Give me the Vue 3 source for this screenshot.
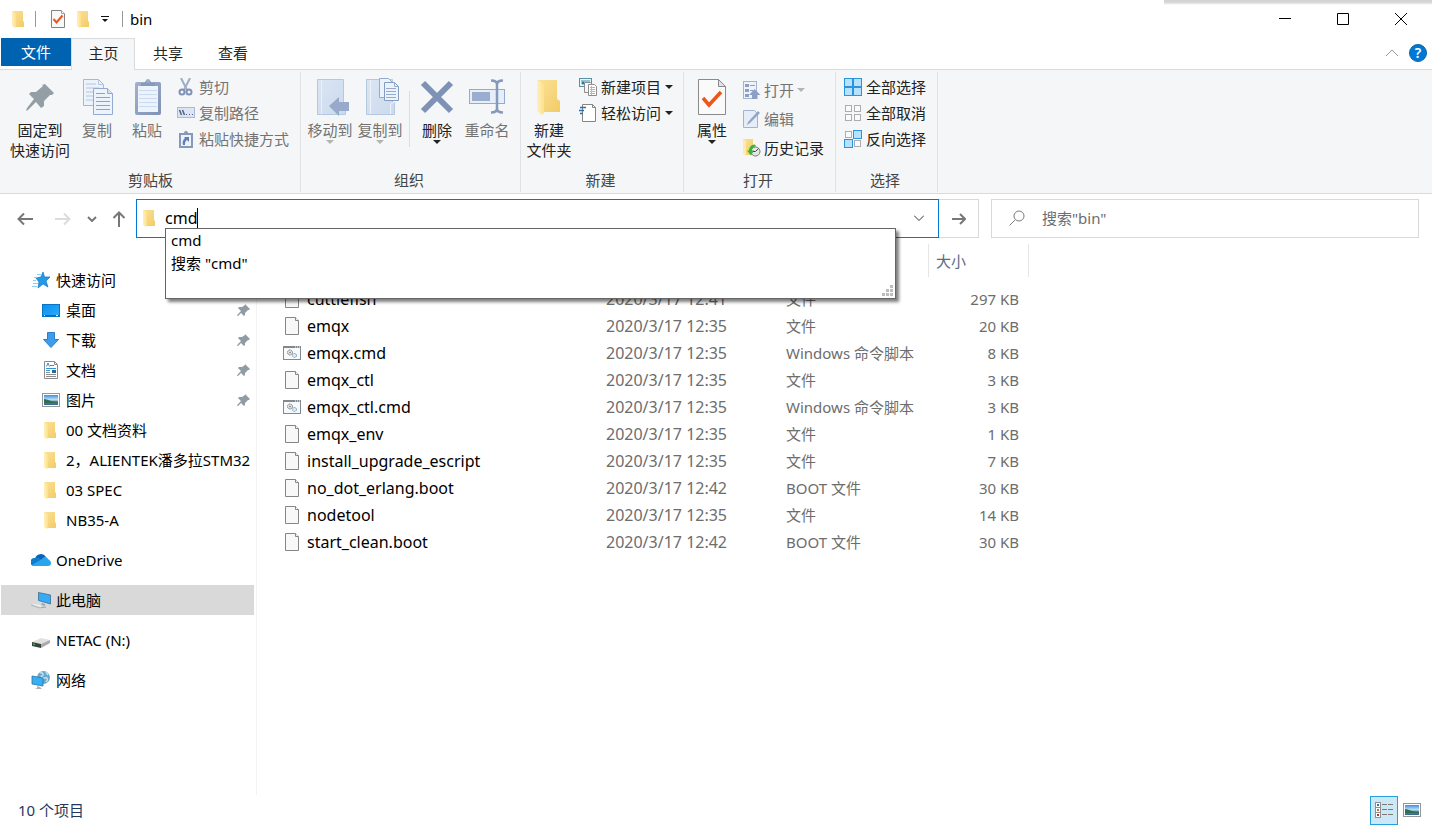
<script setup>
import { ref } from 'vue'

const address = ref('cmd')
const search = ref('')

const tabs = ['共享', '查看']

const clipboardActions = [
  { icon: 'cut', label: '剪切' },
  { icon: 'path', label: '复制路径' },
  { icon: 'shortcut', label: '粘贴快捷方式' },
]
const newActions = [
  { icon: 'newitem', label: '新建项目' },
  { icon: 'easy', label: '轻松访问' },
]
const openActions = [
  { icon: 'open', label: '打开', disabled: true, menu: true },
  { icon: 'edit', label: '编辑', disabled: true },
  { icon: 'history', label: '历史记录' },
]
const selectActions = [
  { icon: 'selall', label: '全部选择' },
  { icon: 'selnone', label: '全部取消' },
  { icon: 'selinv', label: '反向选择' },
]

const places = [
  { icon: 'star', label: '快速访问', top: true },
  { icon: 'desktop', label: '桌面', pinned: true },
  { icon: 'download', label: '下载', pinned: true },
  { icon: 'document', label: '文档', pinned: true },
  { icon: 'picture', label: '图片', pinned: true },
  { icon: 'folder', label: '00 文档资料' },
  { icon: 'folder', label: '2，ALIENTEK潘多拉STM32' },
  { icon: 'folder', label: '03 SPEC' },
  { icon: 'folder', label: 'NB35-A' },
  { icon: 'cloud', label: 'OneDrive', top: true, gap: true },
  { icon: 'pc', label: '此电脑', top: true, gap: true, active: true },
  { icon: 'drive', label: 'NETAC (N:)', top: true, gap: true },
  { icon: 'network', label: '网络', top: true, gap: true },
]

const files = [
  { icon: 'file', name: 'cuttlefish', date: '2020/3/17 12:41', type: '文件', size: '297 KB' },
  { icon: 'file', name: 'emqx', date: '2020/3/17 12:35', type: '文件', size: '20 KB' },
  { icon: 'script', name: 'emqx.cmd', date: '2020/3/17 12:35', type: 'Windows 命令脚本', size: '8 KB' },
  { icon: 'file', name: 'emqx_ctl', date: '2020/3/17 12:35', type: '文件', size: '3 KB' },
  { icon: 'script', name: 'emqx_ctl.cmd', date: '2020/3/17 12:35', type: 'Windows 命令脚本', size: '3 KB' },
  { icon: 'file', name: 'emqx_env', date: '2020/3/17 12:35', type: '文件', size: '1 KB' },
  { icon: 'file', name: 'install_upgrade_escript', date: '2020/3/17 12:35', type: '文件', size: '7 KB' },
  { icon: 'file', name: 'no_dot_erlang.boot', date: '2020/3/17 12:42', type: 'BOOT 文件', size: '30 KB' },
  { icon: 'file', name: 'nodetool', date: '2020/3/17 12:35', type: '文件', size: '14 KB' },
  { icon: 'file', name: 'start_clean.boot', date: '2020/3/17 12:42', type: 'BOOT 文件', size: '30 KB' },
]
</script>

<template>
  <div class="window">
    <svg class="defs" width="0" height="0" aria-hidden="true">
      <defs>
        <linearGradient id="g-folder" x1="0" y1="0" x2="1" y2="1"><stop offset="0" stop-color="#fbe298" /><stop offset="1" stop-color="#f3cb66" /></linearGradient>
        <linearGradient id="g-flap" x1="0" y1="0" x2="1" y2="0"><stop offset="0" stop-color="#fff0bd" /><stop offset="1" stop-color="#fde08a" /></linearGradient>
        <linearGradient id="g-blue" x1="0" y1="0" x2="1" y2="1"><stop offset="0" stop-color="#0a8fee" /><stop offset="1" stop-color="#29adfb" /></linearGradient>
        <linearGradient id="g-sky" x1="0" y1="0" x2="0" y2="1"><stop offset="0" stop-color="#3d8fe0" /><stop offset="0.5" stop-color="#c4e4f6" /><stop offset="0.6" stop-color="#64939c" /><stop offset="1" stop-color="#2e668f" /></linearGradient>
        <linearGradient id="g-board" x1="0" y1="0" x2="1" y2="1"><stop offset="0" stop-color="#a3b1cd" /><stop offset="1" stop-color="#7f91b5" /></linearGradient>
        <linearGradient id="g-pale" x1="0" y1="0" x2="1" y2="1"><stop offset="0" stop-color="#dbe5f3" /><stop offset="1" stop-color="#cbdaee" /></linearGradient>
      </defs>
      <symbol id="i-folder" viewBox="1 0 18 18">
        <path d="M3 1h11v10l1 1v5H6z" fill="url(#g-folder)" />
        <path d="M3 1l4 2v13l-1 2-3-2z" fill="url(#g-flap)" />
      </symbol>
      <symbol id="i-bigfolder" viewBox="0 0 38 38">
        <path d="M7 2h20v19l3 2v11H12z" fill="url(#g-folder)" />
        <path d="M7 2l7 4v29l-2 2-5-4z" fill="url(#g-flap)" />
      </symbol>
      <symbol id="i-check" viewBox="0 0 18 20">
        <path d="M2.500 1.500h10l3 3v14h-13z" fill="#f8f8f8" stroke="#838383" />
        <path d="M12.500 1.500v3h3" fill="#fff" stroke="#a0a0a0" />
        <path d="M4.500 10l3 3.500 6-7" fill="none" stroke="#ee5519" stroke-width="2" />
      </symbol>
      <symbol id="i-props" viewBox="0 0 38 38">
        <path d="M5.500 1.500h20l7 7v28h-27z" fill="#fafafa" stroke="#8a8a8a" />
        <path d="M25.500 1.500v7h7z" fill="#e3e3e3" stroke="#8a8a8a" />
        <path d="M10 20l6 7 12-13" fill="none" stroke="#ee5519" stroke-width="3.500" />
      </symbol>
      <symbol id="i-bigpin" viewBox="0 0 38 38">
        <path d="M24 6l9 9-2 2-2 0-6 6v5l-3 2-5-6-8 8-2 1 1-3 7-9-5-5 2-2h5l7-6-1-1z" fill="#939ea5" />
      </symbol>
      <symbol id="i-pin" viewBox="0 0 14 14">
        <path d="M8 1l5 5-1 1H11L8 10v2l-1 1-3-3-3 3H0l1-2 3-3-3-3 1-1h3l3-2z" fill="#909ca4" />
      </symbol>
      <symbol id="i-copy" viewBox="0 0 38 38">
        <path d="M5.500 1.500h15l5 5v21h-20z" fill="#edf3fb" stroke="#a3b9da" />
        <path d="M20.500 1.500v5h5M8 6h10M8 10h13M8 14h13M8 18h7M8 22h7" fill="none" stroke="#b4c6e1" />
        <path d="M15.500 10.500h14l5 5v21h-19z" fill="#edf3fb" stroke="#94aace" />
        <path d="M29.500 10.500v5h5" fill="#d5e0f1" stroke="#94aace" />
        <path d="M18 15.500h9M18 19.500h14M18 23.500h14M18 27.500h14M18 31.500h14" stroke="#8ca3ca" />
      </symbol>
      <symbol id="i-paste" viewBox="0 0 38 38">
        <rect x="7" y="4" width="26" height="33" rx="2" fill="url(#g-board)" />
        <rect x="10" y="8" width="20" height="26" fill="#edf3fb" />
        <path d="M13 8V5h4a3 3 0 0 1 6 0h4v3z" fill="#8799bb" /><circle cx="20" cy="3" r="2" fill="#9dacc8" />
        <path d="M11 12.500h18M11 16.500h18M11 20.500h18M11 24.500h18M11 28.500h18" stroke="#cbdaee" />
      </symbol>
      <symbol id="i-move" viewBox="0 0 38 38">
        <path d="M6.500 1.500h26v26h2v9h-28z" fill="url(#g-pale)" stroke="#b5c8e2" />
        <path d="M10.500 2v34" stroke="#e9f0f9" />
        <path d="M18 28l10-9v5h10v9H28v5z" fill="#98aac9" />
      </symbol>
      <symbol id="i-copyto" viewBox="0 0 38 38">
        <path d="M5.500 1.500h26v23h2v12h-28z" fill="url(#g-pale)" stroke="#b5c8e2" />
        <path d="M9.500 2v34M29.500 36V26l4-2" stroke="#eef3fa" fill="none" />
        <path d="M18.500.5h9l4 4v15h-13z" fill="#edf3fb" stroke="#94aace" />
        <path d="M23.500 4.500h10l4 4v14h-14z" fill="#edf3fb" stroke="#859cc4" />
        <path d="M33.500 4.500v4h4M25 10.500h10M25 13.500h10M25 16.500h10M25 19.500h10" fill="none" stroke="#94aace" />
      </symbol>
      <symbol id="i-delete" viewBox="0 0 38 38">
        <path d="M5 5l28 28M33 5L5 33" stroke="#7e92b6" stroke-width="6" />
      </symbol>
      <symbol id="i-rename" viewBox="0 0 38 38">
        <rect x="1.500" y="11.500" width="35" height="14" fill="#e6eefa" stroke="#94aace" />
        <rect x="4" y="14" width="18" height="9" fill="#9aadce" />
        <path d="M23 2.500c4 0 6 1 6 4 0-3 2-4 6-4M29 6v25M23 34.500c4 0 6-1 6-4 0 3 2 4 6 4" fill="none" stroke="#8799bb" stroke-width="2.500" />
      </symbol>
      <symbol id="i-cut" viewBox="0 0 18 18">
        <path d="M4 0l6 12M13 0L7 12" stroke="#9dadc7" stroke-width="2" />
        <circle cx="5" cy="14" r="2.500" fill="none" stroke="#7f91b5" stroke-width="2" /><circle cx="12" cy="14" r="2.500" fill="none" stroke="#7f91b5" stroke-width="2" />
      </symbol>
      <symbol id="i-path" viewBox="0 0 18 18">
        <rect x=".5" y="3.500" width="17" height="10" fill="#dce6f3" stroke="#a9bad5" />
        <path d="M2.500 6l2 5M5.500 6l2 5" stroke="#4f6288" stroke-width="1.500" /><path d="M9 10.500h1M12 10.500h1M15 10.500h1" stroke="#4f6288" />
      </symbol>
      <symbol id="i-shortcut" viewBox="0 0 18 18">
        <path d="M2 3h14v15H2z" fill="#8799bb" /><path d="M4 5h10v11H4z" fill="#edf3fb" />
        <path d="M5 5V3h2a2 2 0 0 1 4 0h2v2z" fill="#8799bb" />
        <path d="M7 7h5v5l-2-2c-2 1-2 3-2 5H6c-1-3 0-5 2-7z" fill="#6480b0" />
      </symbol>
      <symbol id="i-newitem" viewBox="0 0 18 18">
        <rect x=".5" y=".5" width="12" height="8" fill="#eaf5fa" stroke="#5891a4" /><path d="M2 2h9v2H2z" fill="#8cc4dc" /><circle cx="4" cy="5" r="1.500" fill="#2d7a94" />
        <path d="M5.500 4.500h6l2 2v8h-8z" fill="#f6f6f6" stroke="#8d8d8d" />
        <path d="M9.500 6.500h6l2 2v9h-8z" fill="#fff" stroke="#8d8d8d" /><path d="M11 9.500h5M11 11.500h5M11 13.500h5M11 15.500h5" stroke="#a2b4e4" /><path d="M12.500 8v9" stroke="#f2a0a0" />
      </symbol>
      <symbol id="i-easy" viewBox="0 0 18 18">
        <path d="M3.500.5h10l3 3v14h-13z" fill="#fff" stroke="#858585" /><path d="M13.500.5v3h3" fill="none" stroke="#858585" />
        <path d="M1 3.500h6M0 6.500h5M1 9.500h3" stroke="#2d70ac" stroke-width="1.500" />
      </symbol>
      <symbol id="i-open" viewBox="0 0 18 18">
        <rect x=".5" y=".5" width="13" height="17" fill="#edf3fb" stroke="#a3b4d2" />
        <path d="M2 3h4v3H2zM2 8h4v3H2zM2 13h4v3H2z" fill="#8da0c4" /><path d="M7 4.500h5M7 9.500h3" stroke="#8da0c4" />
        <path d="M11.500 8l6 6h-3v4H9v-4H6z" fill="#8da0c4" />
      </symbol>
      <symbol id="i-edit" viewBox="0 0 18 18">
        <path d="M.5.5h11l3 3v14H.5z" fill="#e5edf8" stroke="#a3b4d2" /><path d="M4 15l1-3L15 1l2 2L7 13z" fill="#93a6c8" />
      </symbol>
      <symbol id="i-history" viewBox="0 0 18 18">
        <path d="M0 0h10v16H3z" fill="url(#g-folder)" /><path d="M0 0l3 2v15l-3-2z" fill="#ffebaf" />
        <circle cx="12.500" cy="12.500" r="4.500" fill="#e5e7e7" stroke="#777" /><path d="M12.500 12.500l3-3M12.500 12.500H10" stroke="#444" />
        <path d="M12 5.500c-4 0-6 3-6 6H4l4 5 3-5H9c0-2 1-4 4-4z" fill="#38b33e" />
      </symbol>
      <symbol id="i-selall" viewBox="0 0 18 18">
        <g fill="#b6e2ff" stroke="#2b95dc"><rect x=".5" y=".5" width="8" height="8" /><rect x="9.500" y=".5" width="8" height="8" /><rect x=".5" y="9.500" width="8" height="8" /><rect x="9.500" y="9.500" width="8" height="8" /></g>
      </symbol>
      <symbol id="i-selnone" viewBox="0 0 18 18">
        <g fill="#fafafa" stroke="#adadad"><rect x="1.500" y="1.500" width="6" height="6" /><rect x="10.500" y="1.500" width="6" height="6" /><rect x="1.500" y="10.500" width="6" height="6" /><rect x="10.500" y="10.500" width="6" height="6" /></g>
      </symbol>
      <symbol id="i-selinv" viewBox="0 0 18 18">
        <g fill="#fafafa" stroke="#adadad"><rect x="1.500" y="1.500" width="6" height="6" /><rect x="10.500" y="10.500" width="6" height="6" /></g>
        <g fill="#b6e2ff" stroke="#2b95dc"><rect x="9.500" y=".5" width="8" height="8" /><rect x=".5" y="9.500" width="8" height="8" /></g>
      </symbol>
      <symbol id="i-star" viewBox="0 0 18 18">
        <path d="M11 1l1.500 5H18l-4 4 2 6-5-3-5 4 1-6-3-4 5-1z" fill="#1f9be8" stroke="#1573bb" stroke-width=".7" />
        <path d="M5 3.500h4M2 6.500h3M1 9.500h3M1 12.500h5M0 15.500h5" stroke="#8ccff6" />
      </symbol>
      <symbol id="i-desktop" viewBox="0 0 18 18">
        <rect x=".5" y="3.500" width="17" height="12" fill="url(#g-blue)" stroke="#0a73c4" /><path d="M1 14.500h16" stroke="#0a62a8" /><path d="M2 14.500h1M14 14.500h2" stroke="#fff" />
      </symbol>
      <symbol id="i-download" viewBox="0 0 18 18">
        <path d="M5.500 1.500h7v7h4L9 16.500 1.500 8.500h4z" fill="#3e9cea" stroke="#2b7fc9" />
      </symbol>
      <symbol id="i-document" viewBox="0 0 18 18">
        <path d="M2.500.5h10l3 3v14h-13z" fill="#fff" stroke="#8b8b8b" /><path d="M12.500.5v3h3" fill="none" stroke="#8b8b8b" />
        <path d="M4.500 5.500L6 2l1.500 3.500M8 4.500h4M4 7.500h10M4 9.500h4" fill="none" stroke="#3193d0" /><path d="M4 11.500h4M4 13.500h10M4 15.500h10" stroke="#8e8e8e" /><path d="M10 9h4v3h-4z" fill="#2767a3" />
      </symbol>
      <symbol id="i-picture" viewBox="0 0 18 18">
        <rect x=".5" y="2.500" width="17" height="13" fill="#fff" stroke="#969696" /><rect x="2" y="4" width="14" height="10" fill="url(#g-sky)" /><path d="M2 8c4 0 6 3 14 3v1H2z" fill="#356b54" />
      </symbol>
      <symbol id="i-cloud" viewBox="0 0 20 18">
        <path d="M4 8a6 6 0 0 1 11-2l-6 6z" fill="#0864b8" /><path d="M4 7c3-1 4 0 7 2l-7 6H3A4 4 0 0 1 4 7z" fill="#107bd0" /><path d="M11 8c2-3 5-2 6 0 4 2 4 7 0 7H4c-2 0-3-1-3-1z" fill="#28a6ea" />
      </symbol>
      <symbol id="i-pc" viewBox="0 0 20 18">
        <path d="M7.500 1.500l12 2.500v9l-12-3.500z" fill="#36aaf4" stroke="#3b6e96" stroke-width=".8" /><path d="M11 12l3 1v2l-4-1z" fill="#9baab5" /><path d="M0 14l9 3 3-1" fill="none" stroke="#a9b3ba" /><path d="M1 13.500l8 2.500 3-1-7-2z" fill="#e8edf0" /><path d="M11 16.500l4-.5" stroke="#98a3ab" />
      </symbol>
      <symbol id="i-drive" viewBox="0 0 20 18">
        <path d="M1 11l9-4 9 2-9 4z" fill="#e1e1e1" /><path d="M1 11l9 2v4l-9-2z" fill="#3b413d" /><path d="M10 13l9-4v3l-9 5z" fill="#aaa" /><path d="M2 13l2 .5" stroke="#4ad25d" />
      </symbol>
      <symbol id="i-network" viewBox="0 0 20 18">
        <circle cx="12.500" cy="6.500" r="6.500" fill="#6aa9cb" /><path d="M9 2c3-1 4 2 2 3s0 3 3 2 3 2 1 4M15 1l2 3" fill="none" stroke="#c3e1ec" stroke-width="1.500" />
        <path d="M1 5l11 2v8L1 13z" fill="#37aff5" stroke="#2e709e" stroke-width=".8" /><path d="M6 15l3 1 2 2H4l2-1z" fill="#a9b3b9" />
      </symbol>
      <symbol id="i-file" viewBox="0 1 18 18">
        <path d="M2.500.5h10l3 3v14h-13z" transform="translate(0 1)" fill="#f8f8f8" stroke="#858585" /><path d="M12.500 1.500v3h3" fill="#fff" stroke="#858585" />
      </symbol>
      <symbol id="i-script" viewBox="0 0 18 18">
        <rect x=".5" y="2.500" width="17" height="13" fill="#f8f9fa" stroke="#808890" /><path d="M0 3h18" stroke="#808890" stroke-width="2" /><path d="M12 3h1M14 3h1M16 3h1" stroke="#fff" />
        <circle cx="7" cy="8.500" r="2.500" fill="#e5e5e5" stroke="#808080" stroke-dasharray="1.500 .5" /><circle cx="11.500" cy="11.500" r="2" fill="#dceaf7" stroke="#6d9dc6" stroke-dasharray="1.500 .5" /><circle cx="7" cy="8.500" r=".8" fill="#777" />
      </symbol>
    </svg>

    <header class="titlebar">
      <div class="quick">
        <svg class="icon"><use href="#i-folder" /></svg>
        <span class="bar"></span>
        <button class="plain" aria-label="属性"><svg class="icon check"><use href="#i-check" /></svg></button>
        <button class="plain" aria-label="新建文件夹"><svg class="icon"><use href="#i-folder" /></svg></button>
        <button class="plain more" aria-label="自定义快速访问工具栏"><svg width="8" height="8" viewBox="0 0 8 8"><path d="M0 1.500h8" stroke="#111" /><path d="M1 4h6L4 7z" fill="#111" /></svg></button>
        <span class="bar"></span>
        <span class="title">bin</span>
      </div>
      <div class="controls">
        <button class="plain" aria-label="最小化"><svg width="12" height="12" viewBox="0 0 12 12"><path d="M0 5.500h12" stroke="#000" /></svg></button>
        <button class="plain" aria-label="最大化"><svg width="12" height="12" viewBox="0 0 12 12"><path d="M.5.5h11v11H.5z" fill="none" stroke="#000" /></svg></button>
        <button class="plain" aria-label="关闭"><svg width="12" height="12" viewBox="0 0 12 12"><path d="M0 0l12 12M12 0L0 12" stroke="#000" /></svg></button>
      </div>
      <div class="overhang"></div>
    </header>

    <nav class="tabs">
      <button class="tab file">文件</button>
      <button class="tab current">主页</button>
      <button v-for="t in tabs" :key="t" class="tab">{{ t }}</button>
      <div class="help">
        <button class="plain" aria-label="最小化功能区"><svg width="14" height="8" viewBox="0 0 14 8"><path d="M1 7l6-6 6 6" fill="none" stroke="#999" /></svg></button>
        <button class="plain question" aria-label="帮助">?</button>
      </div>
    </nav>

    <section class="ribbon">
      <div class="group clipboard">
        <div class="tools">
          <button class="big wide"><svg><use href="#i-bigpin" /></svg><span>固定到<br>快速访问</span></button>
          <button class="big off"><svg><use href="#i-copy" /></svg><span>复制</span></button>
          <button class="big off"><svg><use href="#i-paste" /></svg><span>粘贴</span></button>
          <div class="stack">
            <button v-for="a in clipboardActions" :key="a.label" class="small off"><svg class="icon"><use :href="'#i-' + a.icon" /></svg>{{ a.label }}</button>
          </div>
        </div>
        <div class="caption">剪贴板</div>
      </div>
      <div class="group organize">
        <div class="tools">
          <button class="big off"><svg><use href="#i-move" /></svg><span>移动到</span><i class="caret"></i></button>
          <button class="big off"><svg><use href="#i-copyto" /></svg><span>复制到</span><i class="caret"></i></button>
          <span class="rule"></span>
          <button class="big"><svg><use href="#i-delete" /></svg><span>删除</span><i class="caret"></i></button>
          <button class="big off"><svg><use href="#i-rename" /></svg><span>重命名</span></button>
        </div>
        <div class="caption">组织</div>
      </div>
      <div class="group create">
        <div class="tools">
          <button class="big"><svg><use href="#i-bigfolder" /></svg><span>新建<br>文件夹</span></button>
          <div class="stack">
            <button v-for="a in newActions" :key="a.label" class="small"><svg class="icon"><use :href="'#i-' + a.icon" /></svg>{{ a.label }}<i class="caret"></i></button>
          </div>
        </div>
        <div class="caption">新建</div>
      </div>
      <div class="group opening">
        <div class="tools">
          <button class="big"><svg><use href="#i-props" /></svg><span>属性</span><i class="caret"></i></button>
          <div class="stack loose">
            <button v-for="a in openActions" :key="a.label" class="small" :class="{ off: a.disabled }"><svg class="icon"><use :href="'#i-' + a.icon" /></svg>{{ a.label }}<i v-if="a.menu" class="caret"></i></button>
          </div>
        </div>
        <div class="caption">打开</div>
      </div>
      <div class="group selecting">
        <div class="tools">
          <div class="stack">
            <button v-for="a in selectActions" :key="a.label" class="small"><svg class="icon"><use :href="'#i-' + a.icon" /></svg>{{ a.label }}</button>
          </div>
        </div>
        <div class="caption">选择</div>
      </div>
    </section>

    <div class="navrow">
      <button class="plain step" aria-label="后退"><svg width="16" height="14" viewBox="0 0 16 14"><path d="M16 7H2M7 1.500L1.500 7 7 12.500" fill="none" stroke="#777" stroke-width="2" /></svg></button>
      <button class="plain step" aria-label="前进"><svg width="16" height="14" viewBox="0 0 16 14"><path d="M0 7h14M9 1.500L14.500 7 9 12.500" fill="none" stroke="#dcdcdc" stroke-width="2" /></svg></button>
      <button class="plain recent" aria-label="最近浏览的位置"><svg width="10" height="6" viewBox="0 0 10 6"><path d="M1 1l4 4 4-4" fill="none" stroke="#777" stroke-width="2" /></svg></button>
      <button class="plain up" aria-label="上移"><svg width="14" height="16" viewBox="0 0 14 16"><path d="M7 16V2M1.500 7L7 1.500 12.500 7" fill="none" stroke="#777" stroke-width="2" /></svg></button>
      <div class="address">
        <svg class="icon"><use href="#i-folder" /></svg>
        <div class="entry">
          <input v-model="address" type="text" aria-label="地址" spellcheck="false">
          <span class="cursor"></span>
        </div>
        <button class="plain expand" aria-label="展开"><svg width="10" height="6" viewBox="0 0 10 6"><path d="M0 .5l5 5 5-5" fill="none" stroke="#333" /></svg></button>
        <div class="suggest" role="listbox" aria-label="建议">
          <div role="option">cmd</div>
          <div role="option">搜索 "cmd"</div>
          <svg class="grip" width="11" height="11" viewBox="0 0 11 11"><path d="M8 0h3v3H8zM4 4h3v3H4zM8 4h3v3H8zM0 8h3v3H0zM4 8h3v3H4zM8 8h3v3H8z" fill="#bdbdbd" /></svg>
        </div>
      </div>
      <button class="go" aria-label="转到"><svg width="14" height="12" viewBox="0 0 14 12"><path d="M0 6h13M8 1l5 5-5 5" fill="none" stroke="#777" stroke-width="2" /></svg></button>
      <label class="search">
        <svg width="16" height="16" viewBox="0 0 16 16"><circle cx="10" cy="6" r="5" fill="none" stroke="#7a7a7a" /><path d="M6 10L.5 15.500" stroke="#7a7a7a" /></svg>
        <input v-model="search" type="text" placeholder='搜索"bin"' aria-label="搜索">
      </label>
    </div>

    <div class="body">
      <aside class="side">
        <a v-for="p in places" :key="p.label" href="#" class="place" :class="{ top: p.top, gap: p.gap, active: p.active }">
          <svg class="icon"><use :href="'#i-' + p.icon" /></svg>
          <span class="name">{{ p.label }}</span>
          <svg v-if="p.pinned" class="pin"><use href="#i-pin" /></svg>
        </a>
      </aside>
      <main class="content">
        <table>
          <colgroup><col class="c-name"><col class="c-date"><col class="c-type"><col class="c-size"></colgroup>
          <thead><tr><th></th><th></th><th></th><th>大小</th></tr></thead>
          <tbody>
            <tr v-for="f in files" :key="f.name">
              <td><span class="filename"><svg class="icon"><use :href="'#i-' + f.icon" /></svg>{{ f.name }}</span></td>
              <td class="date">{{ f.date }}</td>
              <td>{{ f.type }}</td>
              <td class="size">{{ f.size }}</td>
            </tr>
          </tbody>
        </table>
      </main>
    </div>

    <footer class="status">
      <span>10 个项目</span>
      <div class="views">
        <button class="view on" aria-label="详细信息"><svg width="18" height="16" viewBox="0 0 18 16"><g fill="#fff" stroke="#8f8f8f"><rect x=".5" y=".5" width="5" height="5" /><rect x=".5" y="5.500" width="5" height="5" /><rect x=".5" y="10.500" width="5" height="5" /></g><path d="M2 2h2v2H2z" fill="#2a7a9c" /><path d="M2 7h2v2H2z" fill="#b77a36" /><path d="M2 12h2v2H2z" fill="#c22f27" /><path d="M7 2.500h5M13 2.500h5M7 7.500h5M13 7.500h5M7 12.500h5M13 12.500h5" stroke="#7b7b7b" /></svg></button>
        <button class="view" aria-label="大图标"><svg class="icon"><use href="#i-picture" /></svg></button>
      </div>
    </footer>
  </div>
</template>

<style>
body {
  background: #fff;
}
</style>

<style scoped>
.window {
  display: flex;
  flex-direction: column;
  min-height: 100vh;
  font-family: "Noto Sans", "Noto Sans CJK SC", sans-serif;
  font-size: 15px;
  line-height: 20px;
  color: #000;
  overflow: hidden;
}
* { box-sizing: border-box; }
.defs { position: absolute; }
svg { display: block; flex: none; }
button, input { font: inherit; color: inherit; }
.icon { width: 18px; height: 18px; }
.plain {
  display: flex;
  align-items: center;
  justify-content: center;
  padding: 0;
  border: 0;
  background: none;
}

.titlebar {
  position: relative;
  display: flex;
  justify-content: space-between;
  height: 38px;
}
.quick { display: flex; align-items: center; padding-left: 10px; }
.bar { width: 1px; height: 16px; background: #999; margin: 0 13px 0 7px; }
.check { height: 20px; margin-right: 8px; }
.more { width: 24px; }
.more + .bar { margin: 0 7px 0 5px; }
.controls { display: flex; padding-right: 2px; }
.controls .plain { width: 58px; }
.overhang {
  position: absolute;
  top: 0;
  right: 0;
  width: 268px;
  height: 5px;
  background: linear-gradient(#d2d2d2, #d8d8d8 50%, #fff);
}

.tabs { display: flex; height: 32px; padding-left: 1px; border-bottom: 1px solid #dadbdc; }
.tab {
  width: 65px;
  height: 31px;
  padding: 0 0 1px 1px;
  border: 0;
  background: none;
  color: #262626;
}
.tab.file { width: 70px; height: 28px; padding: 0; background: #0063b1; color: #fff; }
.tab.current {
  width: 64px;
  height: 32px;
  padding-bottom: 3px;
  background: #f5f6f7;
  border: 1px solid #dadbdc;
  border-bottom: 0;
}
.help { display: flex; align-items: center; gap: 10px; height: 30px; margin-left: auto; padding-right: 5px; }
.question {
  width: 18px;
  height: 18px;
  border-radius: 50%;
  background: #0078d7;
  border: 1px solid #15629f;
  color: #fff;
  font-size: 14px;
  font-weight: 600;
}

.ribbon {
  display: flex;
  height: 124px;
  padding: 0 0 0 1px;
  background: #f5f6f7;
  border-bottom: 1px solid #dadbdc;
}
.group {
  display: flex;
  flex-direction: column;
  border-right: 1px solid #e1e2e3;
  height: 120px;
  margin-top: 2px;
}
.tools { display: flex; height: 98px; }
.caption { padding-right: 3px; text-align: center; color: #444; }
.clipboard { width: 300px; }
.clipboard .tools { padding-left: 7px; }
.clipboard .caption { padding-right: 0; }
.organize { width: 220px; }
.organize .tools { padding-left: 4px; }
.create { width: 163px; }
.create .tools { padding-left: 3px; }
.opening { width: 152px; }
.opening .tools { padding-left: 3px; }
.selecting { width: 102px; }
.selecting .tools { padding-left: 3px; }
.big {
  display: flex;
  flex-direction: column;
  align-items: center;
  width: 50px;
  padding: 6px 0 0;
  border: 0;
  background: none;
  white-space: nowrap;
  color: #222;
}
.big.wide { width: 64px; }
.big svg { width: 38px; height: 38px; margin-bottom: 4px; }
.off { color: #737373; }
.caret {
  width: 0;
  border: 4px solid transparent;
  border-top-color: currentColor;
  border-bottom: 0;
}
.off .caret { border-top-color: #b3b3b3; }
.rule { width: 1px; height: 56px; margin: 19px 2px 0 4px; background: #dcddde; }
.stack { display: flex; flex-direction: column; padding: 2px 0 0 5px; }
.loose { padding: 3px 0 0 6px; }
.small {
  display: flex;
  align-items: center;
  gap: 4px;
  height: 26px;
  padding: 0;
  border: 0;
  background: none;
  white-space: nowrap;
  color: #222;
}
.loose .small { gap: 3px; height: 29px; }
.small.off { color: #737373; }

.navrow { display: flex; height: 50px; padding: 5px 13px 6px 6px; }
.step { width: 38px; }
.recent { width: 20px; }
.up { width: 34px; }
.address {
  position: relative;
  display: flex;
  align-items: center;
  flex: 2 1 803px;
  padding: 0 0 2px 4px;
  border: 1px solid #0078d7;
}
.entry { position: relative; flex: 1; margin-left: 6px; }
.entry input { display: block; width: 100%; height: 28px; padding: 0; border: 0; outline: 0; background: none; font-size: 16px; }
.cursor { position: absolute; left: 32px; top: 4px; width: 1px; height: 20px; background: #000; }
.expand { width: 38px; height: 36px; }
.suggest {
  position: absolute;
  z-index: 2;
  top: 28px;
  left: 28px;
  right: 42px;
  height: 71px;
  padding: 0 5px;
  line-height: 23px;
  background: #fff;
  border: 1px solid #666;
  box-shadow: 3px 3px 3px rgba(0, 0, 0, 0.5);
}
.grip { position: absolute; right: 2px; bottom: 2px; }
.go {
  display: flex;
  align-items: center;
  justify-content: center;
  flex: none;
  width: 40px;
  padding: 0;
  background: #fff;
  border: 1px solid #d9d9d9;
  border-left: 0;
}
.search {
  display: flex;
  align-items: center;
  flex: 1 1 428px;
  margin-left: 12px;
  padding: 0 0 2px 17px;
  border: 1px solid #d9d9d9;
}
.search input { flex: 1; min-width: 0; margin-left: 17px; padding: 0; border: 0; outline: 0; background: none; }
.search input::placeholder { color: #6d6d6d; opacity: 1; }

.body { display: flex; flex: 1; }
.side { width: 257px; padding: 21px 2px 0 1px; border-right: 1px solid #f3f3f3; }
.place {
  display: flex;
  align-items: center;
  height: 30px;
  padding-left: 41px;
  color: #000;
  text-decoration: none;
  white-space: nowrap;
}
.place.top { padding-left: 30px; }
.place.top .icon { width: 20px; }
.place.gap { margin-top: 10px; }
.place.active { background: #d9d9d9; }
.name { flex: 1; overflow: hidden; margin-left: 6px; }
.place.top .name { margin-left: 5px; }
.pin { width: 14px; height: 14px; margin-right: 3px; }

.content { flex: 1; }
table { table-layout: fixed; width: 772px; border-collapse: separate; border-spacing: 0; color: #6d6d6d; }
.c-name { width: 342px; }
.c-date { width: 180px; }
.c-type { width: 150px; }
.c-size { width: 100px; }
th { height: 33px; padding: 0 7px; font-weight: 400; text-align: left; color: #5a6b82; border-right: 1px solid #e5e5e5; }
tbody::before { content: ""; display: block; height: 8px; }
td { height: 27px; padding: 0 7px; white-space: nowrap; }
td.date { font-size: 16px; }
td.size { text-align: right; padding-right: 10px; }
td:first-child { padding-left: 26px; color: #000; font-size: 16px; }
.filename { display: flex; align-items: center; gap: 6px; }

.status { display: flex; align-items: center; justify-content: space-between; height: 31px; padding: 0 6px 1px 18px; color: #1e395b; }
.views { display: flex; }
.view { display: flex; align-items: center; justify-content: center; width: 28px; height: 29px; padding: 0; border: 0; background: none; }
.view.on { background: #cce8f6; border: 1px solid #26a0da; }
</style>
